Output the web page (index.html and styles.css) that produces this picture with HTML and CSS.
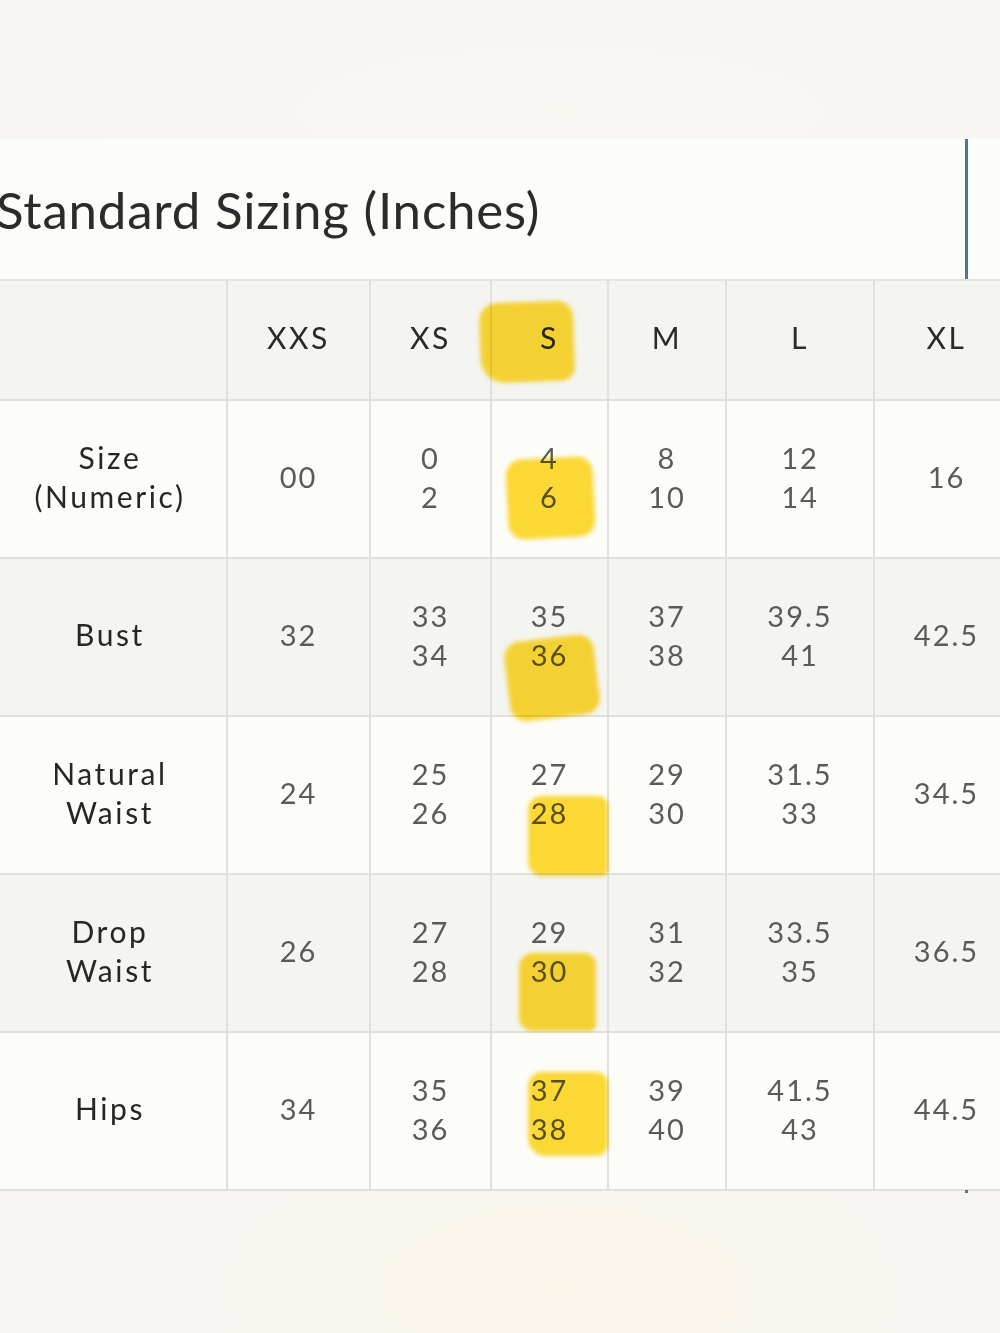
FILE: index.html
```
<!DOCTYPE html>
<html lang="en">
<head>
<meta charset="utf-8">
<title>Standard Sizing (Inches)</title>
<link rel="stylesheet" href="styles.css">
</head>
<body>
<div class="page">
  <div class="top-space"></div>
  <section class="panel">
    <header class="title-bar">
      <h1 class="title">Standard Sizing (Inches)</h1>
    </header>
    <table class="sizes">
      <colgroup>
        <col class="c-label"><col class="c-xxs"><col class="c-xs"><col class="c-s"><col class="c-m"><col class="c-l"><col class="c-xl">
      </colgroup>
      <thead>
        <tr class="shade">
          <th></th><th>XXS</th><th>XS</th><th>S</th><th>M</th><th>L</th><th>XL</th>
        </tr>
      </thead>
      <tbody>
        <tr>
          <th>Size<br>(Numeric)</th><td>00</td><td>0<br>2</td><td>4<br>6</td><td>8<br>10</td><td>12<br>14</td><td>16</td>
        </tr>
        <tr class="shade">
          <th>Bust</th><td>32</td><td>33<br>34</td><td>35<br>36</td><td>37<br>38</td><td>39.5<br>41</td><td>42.5</td>
        </tr>
        <tr>
          <th>Natural<br>Waist</th><td>24</td><td>25<br>26</td><td>27<br>28</td><td>29<br>30</td><td>31.5<br>33</td><td>34.5</td>
        </tr>
        <tr class="shade">
          <th>Drop<br>Waist</th><td>26</td><td>27<br>28</td><td>29<br>30</td><td>31<br>32</td><td>33.5<br>35</td><td>36.5</td>
        </tr>
        <tr>
          <th>Hips</th><td>34</td><td>35<br>36</td><td>37<br>38</td><td>39<br>40</td><td>41.5<br>43</td><td>44.5</td>
        </tr>
      </tbody>
    </table>
  </section>
  <div class="scroll-bar"></div>
  <div class="scroll-dot"></div>
  <div class="hl hl-1"></div>
  <div class="hl hl-2"></div>
  <div class="hl hl-3"></div>
  <div class="hl hl-4"></div>
  <div class="hl hl-5"></div>
  <div class="hl hl-6"></div>
</div>
</body>
</html>
```
FILE: styles.css
```
html, body {
  margin: 0;
  padding: 0;
  overflow: hidden;
}
body {
  width: 1000px;
  height: 1333px;
  background:
    radial-gradient(ellipse 420px 200px at 560px 1290px, #fbf5ea 0%, rgba(251,245,234,0) 100%),
    radial-gradient(ellipse 500px 120px at 560px 110px, #f9f7f2 0%, rgba(249,247,242,0) 100%),
    #f6f5f2;
  font-family: "Lato", "Noto Sans", sans-serif;
}
.page {
  position: relative;
  width: 1000px;
  height: 1333px;
}
.top-space {
  height: 139px;
}
.panel {
  background: #fcfcf9;
  width: 1018px;
}
.title-bar {
  height: 140px;
  display: flex;
  align-items: center;
  border-bottom: 2px solid #e4e4e1;
}
.title {
  margin: 0 0 0 -4px;
  font-weight: 400;
  font-size: 51px;
  letter-spacing: 0.8px;
  color: #2b2b2b;
  white-space: nowrap;
}
.sizes {
  border-collapse: collapse;
  table-layout: fixed;
  width: 1018px;
}
.c-label { width: 227px; }
.c-xxs { width: 143px; }
.c-xs { width: 121px; }
.c-s { width: 117px; }
.c-m { width: 118px; }
.c-l { width: 148px; }
.c-xl { width: 144px; }
.sizes th, .sizes td {
  text-align: center;
  vertical-align: middle;
  font-size: 29px;
  line-height: 39px;
  letter-spacing: 2px;
  padding: 0 0 5px 0;
  border-left: 2px solid #e0e0de;
  border-bottom: 2px solid #e0e0de;
}
.sizes tr > :first-child {
  border-left: none;
}
.sizes thead tr {
  height: 119px;
}
.sizes tbody tr {
  height: 158px;
}
.sizes th {
  font-weight: 400;
  color: #262626;
}
.sizes tbody th {
  font-size: 30px;
  letter-spacing: 2.6px;
  padding-right: 6px;
}
.sizes td {
  color: #5a5a5a;
}
.sizes thead th {
  color: #2a2a2a;
  font-size: 30px;
  letter-spacing: 2.6px;
}
.shade {
  background: #f4f4f1;
}
.scroll-bar {
  position: absolute;
  left: 965px;
  top: 139px;
  width: 3px;
  height: 140px;
  background: #4b7a8c;
}
.scroll-dot {
  position: absolute;
  left: 965px;
  top: 1190px;
  width: 3px;
  height: 3px;
  background: #4b7a8c;
}
.hl {
  position: absolute;
  background: #ffdb36;
  mix-blend-mode: multiply;
  filter: blur(2px);
  border-radius: 16px;
}
.hl-1 {
  left: 480px;
  top: 302px;
  width: 94px;
  height: 80px;
  transform: rotate(-2deg);
  border-radius: 18px 16px 14px 24px;
}
.hl-2 {
  left: 507px;
  top: 458px;
  width: 87px;
  height: 80px;
  transform: rotate(-3deg);
}
.hl-3 {
  left: 507px;
  top: 638px;
  width: 90px;
  height: 80px;
  transform: rotate(-7deg);
}
.hl-4 {
  left: 528px;
  top: 796px;
  width: 80px;
  height: 80px;
  border-radius: 14px 10px 6px 14px;
}
.hl-5 {
  left: 519px;
  top: 953px;
  width: 77px;
  height: 78px;
  border-radius: 14px 12px 6px 14px;
}
.hl-6 {
  left: 528px;
  top: 1072px;
  width: 80px;
  height: 84px;
  border-radius: 14px 12px 12px 18px;
}
```
